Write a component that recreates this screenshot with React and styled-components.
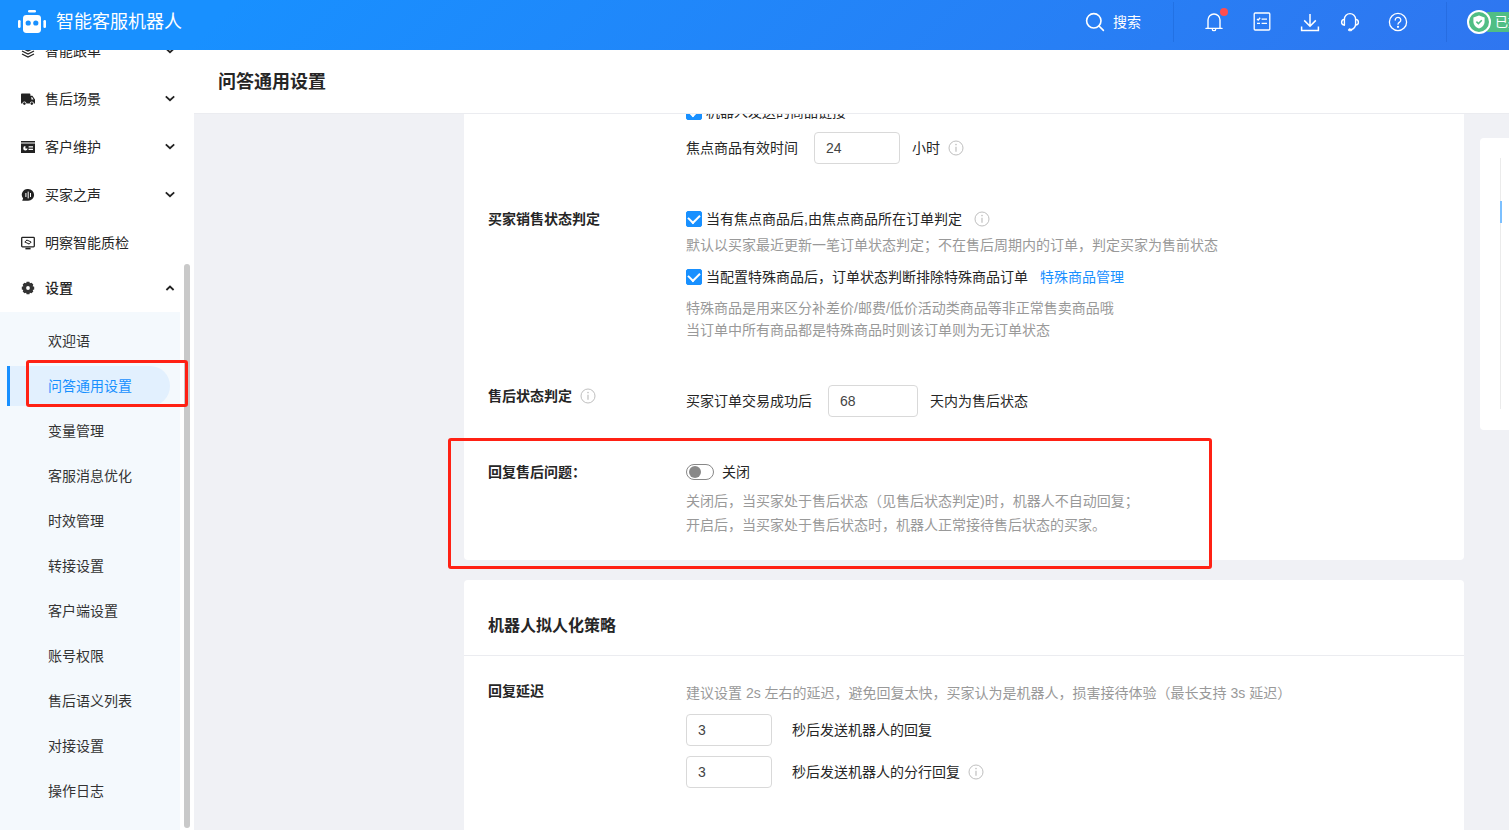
import React, { useState } from "react";
import styled, { createGlobalStyle, css } from "styled-components";

const GlobalStyle = createGlobalStyle`
    * {
        box-sizing: border-box;
    }
    body {
        margin: 0;
        color: #262626;
        font-family: "Liberation Sans", "Noto Sans CJK SC", sans-serif;
        font-size: 14px;
        line-height: 22px;
    }
    button,
    input {
        font: inherit;
        color: inherit;
    }
    button {
        padding: 0;
        border: 0;
        background: none;
        cursor: pointer;
    }
    ul {
        margin: 0;
        padding: 0;
        list-style: none;
    }
    a {
        text-decoration: none;
    }
    svg {
        display: block;
        flex: none;
    }
`;

const Page = styled.div`
    display: flex;
    flex-direction: column;
    height: 100vh;
    overflow: hidden;
`;

/* ---------- header ---------- */

const Header = styled.header`
    display: flex;
    align-items: center;
    flex: none;
    height: 50px;
    padding: 0 0 6px 18px;
    overflow: hidden;
    color: #fff;
    background: linear-gradient(135deg, #1890ff 0%, #1890ff 15%, #2f76f0 100%);
`;

const Brand = styled.a`
    display: flex;
    align-items: center;
    gap: 10px;
    margin-right: auto;
    color: #fff;
    font-size: 18px;
    white-space: nowrap;
`;

const SearchButton = styled.button`
    display: flex;
    align-items: center;
    gap: 8px;
    margin-right: 32px;
    white-space: nowrap;
`;

const Divider = styled.span`
    flex: none;
    width: 1px;
    height: 40px;
    background: rgba(0, 50, 140, 0.15);
`;

const Tools = styled.div`
    display: flex;
    gap: 24px;
    margin-left: ${(props) => props.$left || 0}px;
`;

const IconButton = styled.button`
    position: relative;
    display: grid;
    place-items: center;
    width: 24px;
    height: 24px;
`;

const Dot = styled.span`
    position: absolute;
    top: -2px;
    right: -2px;
    width: 8px;
    height: 8px;
    border-radius: 50%;
    background: #ff4d4f;
`;

const StatusBadge = styled.div`
    display: flex;
    align-items: center;
    flex: none;
    width: 42px;
    margin-left: 20px;
`;

const StatusCircle = styled.span`
    position: relative;
    z-index: 1;
    display: grid;
    place-items: center;
    flex: none;
    width: 24px;
    height: 24px;
    border: 2px solid #fff;
    border-radius: 50%;
    background: #50be84;
`;

const StatusText = styled.span`
    flex: none;
    margin-left: -4px;
    padding-left: 8px;
    font-size: 13px;
    line-height: 20px;
    background: #50be84;
`;

/* ---------- sidebar ---------- */

const Body = styled.div`
    display: flex;
    flex: 1;
    min-height: 0;
`;

const Sidebar = styled.aside`
    display: flex;
    flex: none;
    width: 194px;
    overflow: hidden;
    background: #fff;
`;

const Menu = styled.nav`
    width: 180px;
    margin-top: -23px;
`;

const MenuItem = styled.button`
    display: flex;
    align-items: center;
    gap: 10px;
    width: 100%;
    height: ${(props) => (props.$open ? 42 : 48)}px;
    margin-bottom: ${(props) => (props.$open ? 3 : 0)}px;
    padding: 0 5px 0 21px;
    font-weight: ${(props) => (props.$open ? 500 : 400)};

    span {
        flex: 1;
        text-align: left;
    }
`;

const SubMenu = styled.ul`
    display: flex;
    flex-direction: column;
    gap: 5px;
    padding: 9px 10px 24px 7px;
    background: #f4f9fd;
`;

const SubItem = styled.li`
    position: relative;
`;

const SubLink = styled.a`
    display: block;
    padding-left: 38px;
    border-left: 3px solid transparent;
    color: #333;
    line-height: 40px;

    ${(props) =>
        props.$active &&
        css`
            color: #1890ff;
            border-left-color: #1890ff;
            border-radius: 0 20px 20px 0;
            background: #e2f0fe;
        `}
`;

const ScrollTrack = styled.div`
    display: flex;
    width: 14px;
    padding: 214px 4px 2px;
`;

const ScrollThumb = styled.div`
    flex: 1;
    border-radius: 3px;
    background: #c9c9c9;
`;

/* red frame drawn over a highlighted area */
const Frame = styled.div`
    position: absolute;
    z-index: 2;
    inset: ${(props) => props.$inset};
    border: 3px solid #ff2114;
    border-radius: 3px;
    pointer-events: none;
`;

/* ---------- main ---------- */

const Main = styled.main`
    display: flex;
    flex-direction: column;
    flex: 1;
    min-width: 0;
    overflow: hidden;
    background: #f0f1f5;
`;

const TitleBar = styled.div`
    flex: none;
    padding: 20px 24px 19px;
    border-bottom: 1px solid #ebecf0;
    background: #fff;
`;

const PageTitle = styled.h1`
    margin: 0;
    font-size: 18px;
    font-weight: 700;
    line-height: 24px;
`;

const Content = styled.div`
    display: flex;
    align-items: flex-start;
    flex: 1;
    gap: 16px;
    min-height: 0;
    padding-left: 270px;
    overflow: hidden;
`;

const Cards = styled.div`
    display: flex;
    flex-direction: column;
    flex: 1;
    gap: 20px;
    min-width: 0;
`;

const Card = styled.section`
    border-radius: ${(props) => (props.$scrolled ? "0 0 4px 4px" : "4px")};
    background: #fff;
`;

const Rows = styled.div`
    display: flex;
    flex-direction: column;
    gap: 44px;
    padding: 24px 24px 23px;

    ${(props) =>
        props.$scrolled &&
        css`
            margin-top: -13px;
            padding-top: 0;
        `}
`;

const CardTitle = styled.h2`
    margin: 0;
    padding: 34px 24px 17px;
    border-bottom: 1px solid #ebecf0;
    font-size: 16px;
    font-weight: 700;
    line-height: 24px;
`;

const Row = styled.div`
    position: relative;
    display: flex;
`;

const RowLabel = styled.div`
    display: flex;
    align-items: center;
    align-self: flex-start;
    flex: none;
    gap: 8px;
    width: 198px;
    font-weight: 700;
`;

const Field = styled.div`
    display: flex;
    flex-direction: column;
    min-width: 0;
    margin-top: ${(props) => props.$top || 0}px;
`;

const Line = styled.div`
    display: flex;
    align-items: center;
    gap: ${(props) => props.$gap || 12}px;
    margin-top: ${(props) => props.$top || 0}px;
    white-space: nowrap;
`;

const CheckLabel = styled.label`
    display: flex;
    align-items: center;
    gap: ${(props) => props.$gap || 4}px;
`;

const Checkbox = styled.input`
    display: grid;
    place-items: center;
    appearance: none;
    width: 16px;
    height: 16px;
    margin: 0;
    border: 1px solid #d9d9d9;
    border-radius: 2px;

    &:checked {
        border-color: #1890ff;
        background: #1890ff;
    }

    &:checked::after {
        content: "";
        width: 6px;
        height: 9px;
        margin-bottom: 3px;
        border: solid #fff;
        border-width: 0 2px 2px 0;
        transform: rotate(45deg);
    }
`;

const Switch = styled.input`
    display: flex;
    align-items: center;
    appearance: none;
    width: 28px;
    height: 16px;
    margin: 0;
    padding: 0 2px;
    border: 1px solid #888;
    border-radius: 8px;

    &::before {
        content: "";
        width: 12px;
        height: 12px;
        border-radius: 50%;
        background: #888;
    }

    &:checked {
        justify-content: flex-end;
        border-color: #1890ff;
    }

    &:checked::before {
        background: #1890ff;
    }
`;

const NumberBox = styled.input`
    width: ${(props) => props.$width || 86}px;
    height: 32px;
    padding: 0 11px;
    border: 1px solid #d9d9d9;
    border-radius: 4px;
    color: #444;
    background: #fff;
`;

const Hint = styled.p`
    margin: ${(props) => props.$top || 0}px 0 0;
    color: #999;
    line-height: ${(props) => props.$line || 22}px;
    white-space: nowrap;
`;

const Link = styled.a`
    color: #1890ff;
`;

const Anchors = styled.nav`
    flex: none;
    width: 160px;
    margin: 24px -131px 0 0;
    padding: 20px 20px 21px;
    border-radius: 4px;
    background: #fff;
`;

const AnchorRail = styled.div`
    height: 251px;
    padding-top: 43px;
    border-left: 1px solid #ebebeb;
`;

const AnchorMark = styled.div`
    width: 2px;
    height: 22px;
    margin-left: -1px;
    background: #7cc0ff;
`;

/* ---------- icons ---------- */

const RobotIcon = () => (
    <svg width="28" height="24" viewBox="0 0 28 24" fill="#fff">
        <rect x="10" y="0" width="8" height="2.4" rx="1.2" />
        <rect x="0" y="10" width="2.6" height="8" rx="1.3" />
        <rect x="25.4" y="10" width="2.6" height="8" rx="1.3" />
        <rect x="5" y="5" width="18" height="18" rx="3.4" />
        <circle cx="10.2" cy="13" r="2.6" fill="#1890ff" />
        <circle cx="17.8" cy="13" r="2.6" fill="#1890ff" />
    </svg>
);

const SearchIcon = () => (
    <svg width="20" height="20" viewBox="0 0 20 20" fill="none" stroke="#fff" strokeWidth="1.6" strokeLinecap="round">
        <circle cx="8.8" cy="8.8" r="7.2" />
        <path d="M14 14l4.4 4.4" />
    </svg>
);

const BellIcon = () => (
    <svg width="20" height="20" viewBox="0 0 20 20" fill="none" stroke="#fff" strokeWidth="1.4" strokeLinecap="round">
        <path d="M4 16V8a6 6 0 0 1 12 0v8M2 16.4h16" />
        <path d="M8.4 17.4a1.6 1.2 0 0 0 3.200 0" />
    </svg>
);

const ListIcon = () => (
    <svg width="18" height="20" viewBox="0 0 18 20" fill="none" stroke="#fff" strokeWidth="1.3">
        <rect x="1.2" y="1" width="15.6" height="17" rx="1" />
        <path d="M4 7l1.2 1 2-2.200M8.600 7.200H14M4 11.400h3M8.600 11.400H14" />
    </svg>
);

const DownloadIcon = () => (
    <svg width="20" height="20" viewBox="0 0 20 20" fill="none" stroke="#fff" strokeWidth="1.5">
        <path d="M10 2v12M4.2 8.4L10 14.2l5.8-5.8M1.6 14.6v3.8h16.8v-3.8" />
    </svg>
);

const HeadsetIcon = () => (
    <svg width="20" height="20" viewBox="0 0 20 20" fill="none" stroke="#fff" strokeWidth="1.4" strokeLinecap="round">
        <path d="M4.400 13V7.200a5.600 5.600 0 0 1 11.200 0V12c0 3-1.600 4.600-4 5.600" />
        <path d="M4.400 7.400C2.400 7.600 1.600 8.800 1.600 10.200S2.400 12.800 4.400 13M15.600 7.400c2 .2 2.800 1.400 2.800 2.800s-.8 2.600-2.800 2.800" />
        <rect x="8.400" y="17" width="3.600" height="1.800" rx=".9" fill="#fff" stroke="#fff" strokeWidth=".8" />
    </svg>
);

const HelpIcon = () => (
    <svg width="20" height="20" viewBox="0 0 20 20" fill="none" stroke="#fff" strokeWidth="1.3" strokeLinecap="round">
        <circle cx="10" cy="10" r="8.6" />
        <path d="M7.2 8a2.8 2.6 0 1 1 4.6 2C10.8 10.6 10 11 10 12.2" />
        <circle cx="10" cy="14.8" r=".5" fill="#fff" />
    </svg>
);

const ShieldIcon = () => (
    <svg width="14" height="14" viewBox="0 0 14 14">
        <path d="M7 .6L12.6 2.4V7c0 3-2.4 5.2-5.6 6.6C3.8 12.2 1.4 10 1.4 7V2.4z" fill="#fff" />
        <path d="M4.4 6.6l2 2 3.4-3.4" fill="none" stroke="#50be84" strokeWidth="1.5" />
    </svg>
);

const LayersIcon = () => (
    <svg width="14" height="14" viewBox="0 0 14 14" fill="none" stroke="#222" strokeWidth="1.3">
        <path d="M7 1.2L13 4 7 7 1 4z" />
        <path d="M1 7l6 3 6-3M1 10l6 3 6-3" />
    </svg>
);

const TruckIcon = () => (
    <svg width="14" height="14" viewBox="0 0 14 14" fill="#222">
        <path d="M.8 1.6h7.8c.5 0 .8.3.8.8v1.4h2l2.6 3.6v4h-1.2a2 2 0 0 0-4 0H5.4a2 2 0 0 0-4 0H0v-9c0-.5.3-.8.8-.8zM10.4 5v2.4h2.2L11 5z" fillRule="evenodd" />
        <circle cx="3.4" cy="11.6" r="1.3" />
        <circle cx="10.8" cy="11.6" r="1.3" />
    </svg>
);

const CardIcon = () => (
    <svg width="14" height="14" viewBox="0 0 14 14">
        <path d="M0 1h14v1.4H0zM0 3.4h14V13H0z" fill="#222" />
        <path d="M4.4 6a2.2 2.2 0 1 0 2.2 2.4H4.4zM7.600 6.200h4.400v1.300H7.600zM7.600 8.800h4.400v1.300H7.600z" fill="#fff" />
    </svg>
);

const VoiceIcon = () => (
    <svg width="14" height="14" viewBox="0 0 14 14">
        <path d="M7.2 1a5.8 5.8 0 1 1 0 11.8H1.2l.9-2.4A5.8 5.8 0 0 1 7.2 1z" fill="#222" />
        <path d="M4.9 5v4M7.2 3.6v6.8M9.5 5v4" stroke="#fff" strokeWidth="1" />
    </svg>
);

const MonitorIcon = () => (
    <svg width="14" height="14" viewBox="0 0 14 14" fill="none" stroke="#222" strokeWidth="1.3">
        <rect x=".7" y="1.4" width="12.6" height="9.4" rx=".8" />
        <path d="M4.4 12.6h5.2" strokeWidth="1.6" />
        <path d="M6 4L3.800 6l4.400 2M8 8.200L10.200 6 5.800 4" strokeWidth="1" />
    </svg>
);

const GearIcon = () => (
    <svg width="14" height="14" viewBox="0 0 14 14">
        <path
            d="M5.6.8h2.8l.5 1.5 1.6-.5 1.8 1.8-.6 1.6 1.5.5v2.8l-1.5.5.6 1.5-1.8 1.8-1.6-.6-.5 1.5H5.6l-.5-1.5-1.6.6-1.8-1.8.6-1.5L.8 8.5V5.7l1.5-.5-.6-1.6 1.8-1.8 1.6.5z"
            fill="#333"
        />
        <circle cx="7" cy="7" r="1.9" fill="#fff" />
    </svg>
);

const Chevron = ({ up }) => (
    <svg width="10" height="10" viewBox="0 0 10 10" fill="none" stroke="#222" strokeWidth="1.8">
        <path d={up ? "M1.4 7L5 3.6 8.6 7" : "M.8 2.4L5 6.2l4.2-3.8"} />
    </svg>
);

const InfoIcon = () => (
    <svg width="16" height="16" viewBox="0 0 16 16" fill="none" stroke="#bfbfbf">
        <circle cx="8" cy="8" r="7" />
        <path d="M8 6.8v5" strokeWidth="1.2" />
        <circle cx="8" cy="4.6" r=".8" fill="#bfbfbf" stroke="none" />
    </svg>
);

/* ---------- data ---------- */

const MENU = [
    { title: "智能跟单", Icon: LayersIcon, arrow: true },
    { title: "售后场景", Icon: TruckIcon, arrow: true },
    { title: "客户维护", Icon: CardIcon, arrow: true },
    { title: "买家之声", Icon: VoiceIcon, arrow: true },
    { title: "明察智能质检", Icon: MonitorIcon },
    { title: "设置", Icon: GearIcon, arrow: true, open: true }
];

const SETTINGS = [
    "欢迎语",
    "问答通用设置",
    "变量管理",
    "客服消息优化",
    "时效管理",
    "转接设置",
    "客户端设置",
    "账号权限",
    "售后语义列表",
    "对接设置",
    "操作日志"
];

const Check = ({ children }) => (
    <CheckLabel>
        <Checkbox type="checkbox" defaultChecked />
        {children}
    </CheckLabel>
);

const TopBar = () => (
    <Header>
        <Brand href="#">
            <RobotIcon />
            智能客服机器人
        </Brand>
        <SearchButton>
            <SearchIcon />
            搜索
        </SearchButton>
        <Divider />
        <Tools $left={28}>
            <IconButton aria-label="通知">
                <BellIcon />
                <Dot />
            </IconButton>
            <IconButton aria-label="任务">
                <ListIcon />
            </IconButton>
            <IconButton aria-label="下载">
                <DownloadIcon />
            </IconButton>
        </Tools>
        <Tools $left={16}>
            <IconButton aria-label="客服">
                <HeadsetIcon />
            </IconButton>
            <IconButton aria-label="帮助">
                <HelpIcon />
            </IconButton>
        </Tools>
        <Tools $left={36}>
            <Divider />
        </Tools>
        <StatusBadge>
            <StatusCircle>
                <ShieldIcon />
            </StatusCircle>
            <StatusText>已授权</StatusText>
        </StatusBadge>
    </Header>
);

const SideMenu = ({ active, onSelect }) => (
    <Sidebar>
        <Menu>
            {MENU.map(({ title, Icon, arrow, open }) => (
                <MenuItem key={title} $open={open} aria-expanded={arrow ? !!open : undefined}>
                    <Icon />
                    <span>{title}</span>
                    {arrow && <Chevron up={open} />}
                </MenuItem>
            ))}
            <SubMenu>
                {SETTINGS.map((name) => (
                    <SubItem key={name}>
                        <SubLink href="#" $active={name === active} onClick={() => onSelect(name)}>
                            {name}
                        </SubLink>
                        {name === "问答通用设置" && <Frame $inset="-6px -18px -1px 19px" />}
                    </SubItem>
                ))}
            </SubMenu>
        </Menu>
        <ScrollTrack>
            <ScrollThumb />
        </ScrollTrack>
    </Sidebar>
);

const StatusCard = () => {
    const [autoReply, setAutoReply] = useState(false);

    return (
        <Card $scrolled>
            <Rows $scrolled>
                <Row>
                    <RowLabel />
                    <Field>
                        <Line>
                            <Check>机器人发送的商品链接</Check>
                        </Line>
                        <Line $top={9}>
                            <CheckLabel $gap={16}>
                                焦点商品有效时间
                                <NumberBox defaultValue="24" />
                            </CheckLabel>
                            <CheckLabel as="span" $gap={8}>
                                小时
                                <InfoIcon />
                            </CheckLabel>
                        </Line>
                    </Field>
                </Row>
                <Row>
                    <RowLabel>买家销售状态判定</RowLabel>
                    <Field>
                        <Line>
                            <Check>当有焦点商品后,由焦点商品所在订单判定</Check>
                            <InfoIcon />
                        </Line>
                        <Hint $top={4}>默认以买家最近更新一笔订单状态判定；不在售后周期内的订单，判定买家为售前状态</Hint>
                        <Line $top={10}>
                            <Check>当配置特殊商品后，订单状态判断排除特殊商品订单</Check>
                            <Link href="#">特殊商品管理</Link>
                        </Line>
                        <Hint $top={9}>特殊商品是用来区分补差价/邮费/低价活动类商品等非正常售卖商品哦</Hint>
                        <Hint>当订单中所有商品都是特殊商品时则该订单则为无订单状态</Hint>
                    </Field>
                </Row>
                <Row>
                    <RowLabel>
                        售后状态判定
                        <InfoIcon />
                    </RowLabel>
                    <Field>
                        <Line>
                            <CheckLabel $gap={16}>
                                买家订单交易成功后
                                <NumberBox $width={90} defaultValue="68" />
                            </CheckLabel>
                            天内为售后状态
                        </Line>
                    </Field>
                </Row>
                <Row>
                    <RowLabel>回复售后问题：</RowLabel>
                    <Field>
                        <CheckLabel $gap={8}>
                            <Switch
                                type="checkbox"
                                role="switch"
                                checked={autoReply}
                                onChange={(e) => setAutoReply(e.target.checked)}
                            />
                            {autoReply ? "开启" : "关闭"}
                        </CheckLabel>
                        <Hint $top={6} $line={24}>
                            关闭后，当买家处于售后状态（见售后状态判定)时，机器人不自动回复；
                        </Hint>
                        <Hint $line={24}>开启后，当买家处于售后状态时，机器人正常接待售后状态的买家。</Hint>
                    </Field>
                    <Frame $inset="-23px 228px -32px -40px" />
                </Row>
            </Rows>
        </Card>
    );
};

const PersonaCard = () => (
    <Card>
        <CardTitle>机器人拟人化策略</CardTitle>
        <Rows>
            <Row>
                <RowLabel>回复延迟</RowLabel>
                <Field $top={2}>
                    <Hint>建议设置 2s 左右的延迟，避免回复太快，买家认为是机器人，损害接待体验（最长支持 3s 延迟）</Hint>
                    <Line $top={10} $gap={20}>
                        <NumberBox defaultValue="3" aria-label="秒后发送机器人的回复" />
                        秒后发送机器人的回复
                    </Line>
                    <Line $top={10} $gap={20}>
                        <NumberBox defaultValue="3" aria-label="秒后发送机器人的分行回复" />
                        <CheckLabel as="span" $gap={8}>
                            秒后发送机器人的分行回复
                            <InfoIcon />
                        </CheckLabel>
                    </Line>
                </Field>
            </Row>
            <Row />
        </Rows>
    </Card>
);

const App = () => {
    const [active, setActive] = useState("问答通用设置");

    return (
        <Page lang="zh-CN">
            <GlobalStyle />
            <TopBar />
            <Body>
                <SideMenu active={active} onSelect={setActive} />
                <Main>
                    <TitleBar>
                        <PageTitle>{active}</PageTitle>
                    </TitleBar>
                    <Content>
                        <Cards>
                            <StatusCard />
                            <PersonaCard />
                        </Cards>
                        <Anchors aria-label="页面导航">
                            <AnchorRail>
                                <AnchorMark />
                            </AnchorRail>
                        </Anchors>
                    </Content>
                </Main>
            </Body>
        </Page>
    );
};

export default App;
